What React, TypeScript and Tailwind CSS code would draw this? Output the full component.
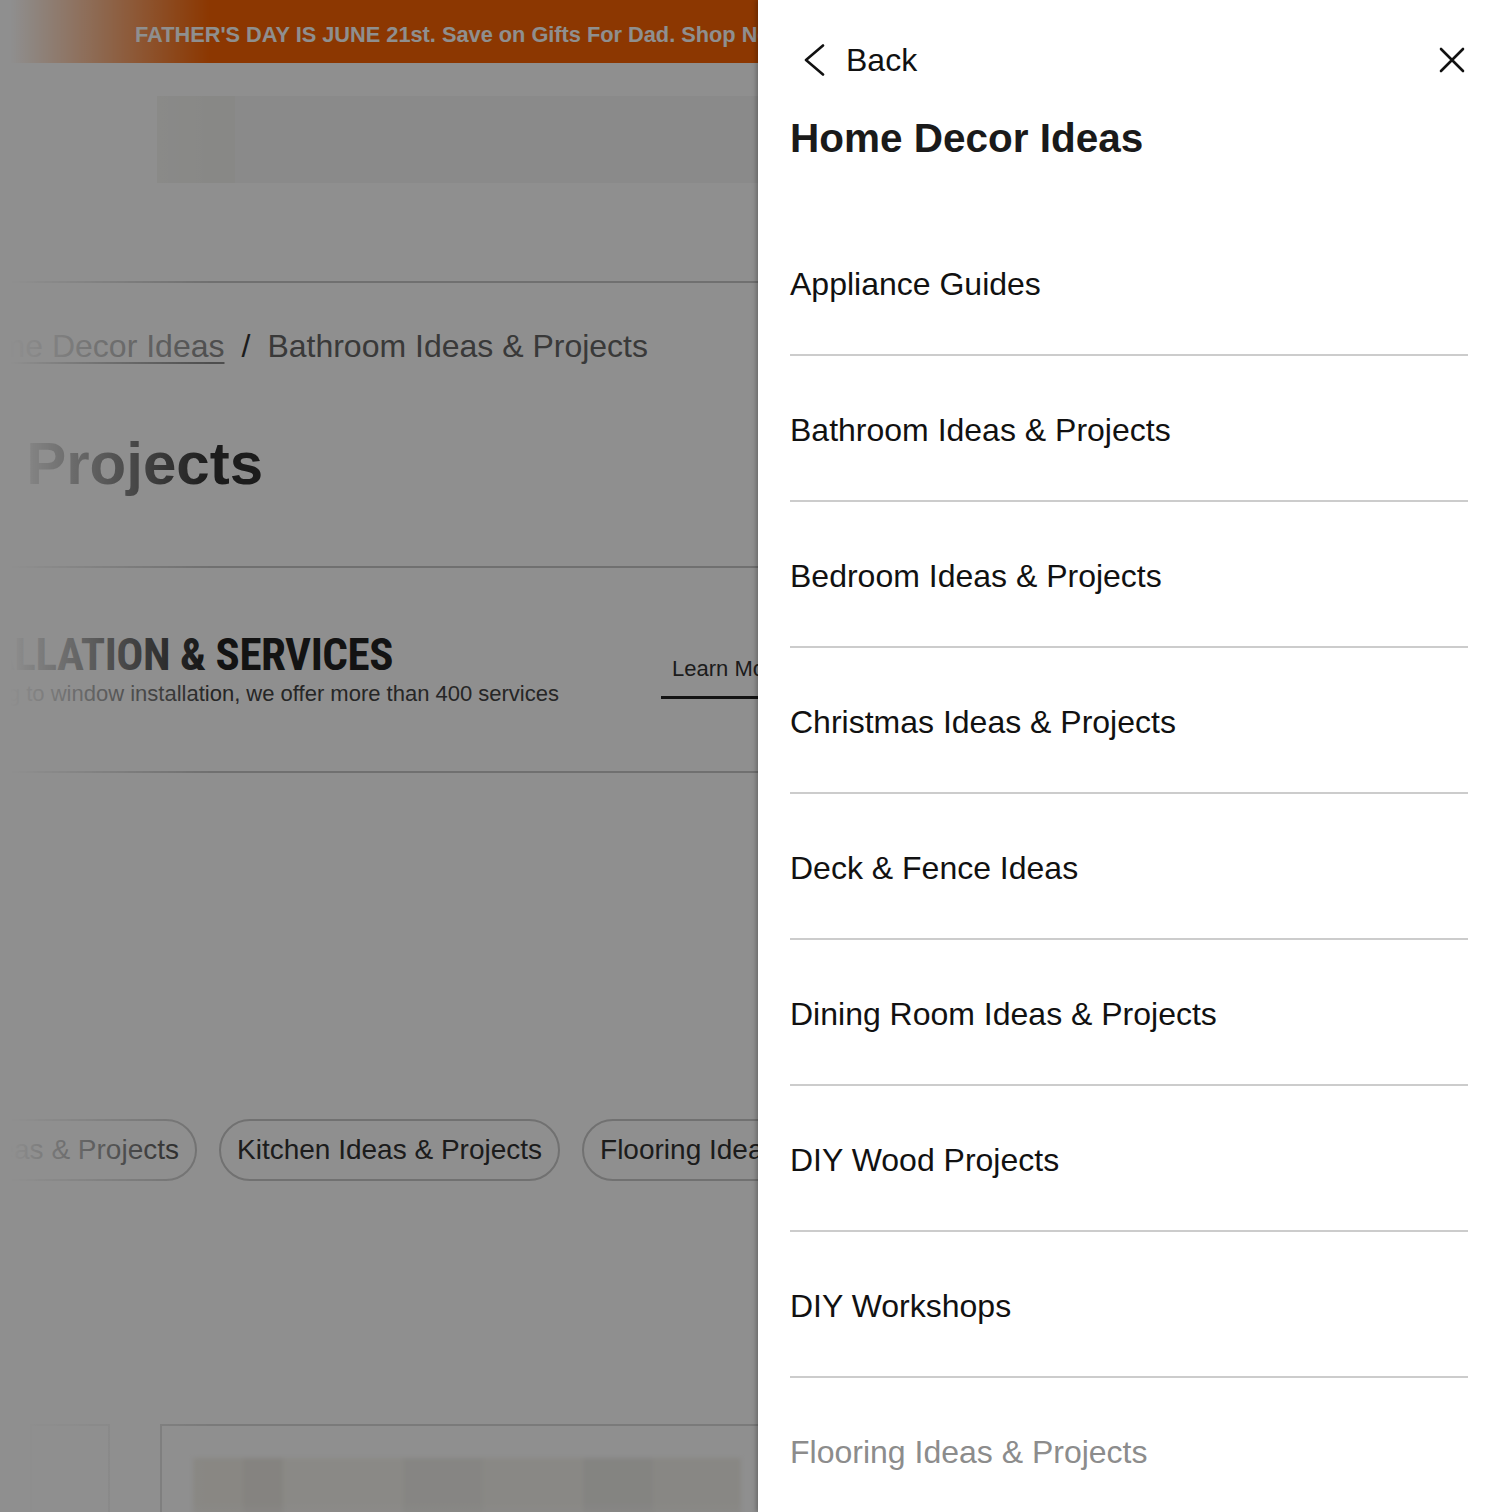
import React from "react";

const sans = { fontFamily: '"Liberation Sans", Arial, sans-serif' };

const menuLinks = [
  "Appliance Guides",
  "Bathroom Ideas & Projects",
  "Bedroom Ideas & Projects",
  "Christmas Ideas & Projects",
  "Deck & Fence Ideas",
  "Dining Room Ideas & Projects",
  "DIY Wood Projects",
  "DIY Workshops",
  "Flooring Ideas & Projects",
];

const Pill = ({ label }: { label: string }) => (
  <span className="shrink-0 whitespace-nowrap rounded-full border-2 border-[#c9c9c9] px-4 h-[62px] flex items-center text-[28px] text-[#333]">
    {label}
  </span>
);

// page sitting behind the drawer, scrolled a bit to the right
const BackgroundPage = () => (
  <div className="w-full flex flex-col bg-white" style={sans}>
    <div className="h-[63px] bg-[#f96302] flex items-center pt-[7px] pl-[135px] whitespace-nowrap">
      <span className="text-white font-bold text-[21.75px]">
        FATHER'S DAY IS JUNE 21st. Save on Gifts For Dad. Shop Now
      </span>
    </div>

    {/* search bar strip */}
    <div className="mt-[33px] h-[87px] ml-[157px] flex bg-[#f6f6f6]">
      <div className="w-[78px] bg-[#f3f3ef]" />
      <div className="flex-1" />
    </div>

    <div className="mt-[98px] h-[2px] bg-[#c8c8c8]" />

    <div className="mt-[45px] w-[648px] flex justify-end">
      <div className="whitespace-nowrap text-[32px] leading-[37px] flex items-center gap-[17px]">
        <span className="text-[#8c8c8c] underline underline-offset-[5px] decoration-[2px]">Home Decor Ideas</span>
        <span className="text-[#333]">/</span>
        <span className="text-[#666]">Bathroom Ideas &amp; Projects</span>
      </div>
    </div>

    <div className="mt-[65px] w-[263px] flex justify-end">
      <h1 className="whitespace-nowrap text-[60px] leading-[68px] font-bold text-[#333]">
        Bathroom Ideas &amp; Projects
      </h1>
    </div>

    <div className="mt-[68px] h-[2px] bg-[#c8c8c8]" />

    <div className="mt-[61px] flex items-start">
      <div className="w-[661px] flex flex-col shrink-0">
        <div className="w-[393px] flex justify-end">
          <span
            className="whitespace-nowrap text-[45px] leading-[52px] font-bold text-[#222] tracking-[-0.01em]"
            style={{ fontFamily: '"Liberation Sans Narrow", "Roboto Condensed", Arial, sans-serif' }}
          >
            INSTALLATION &amp; SERVICES
          </span>
        </div>
        <div className="w-[559px] flex justify-end">
          <span className="whitespace-nowrap text-[22px] leading-[26px] text-[#444]">
            From flooring to window installation, we offer more than 400 services
          </span>
        </div>
      </div>
      <div className="mt-[27px] pl-[11px] pr-6 pb-[14px] border-b-[3px] border-[#222] whitespace-nowrap text-[22px] leading-[26px] text-[#333]">
        Learn More
      </div>
    </div>

    <div className="mt-[64px] h-[2px] bg-[#c8c8c8]" />

    <div className="mt-[346px] flex gap-[22px]">
      <div className="w-[197px] shrink-0 flex justify-end">
        <Pill label="Bedroom Ideas & Projects" />
      </div>
      <Pill label="Kitchen Ideas & Projects" />
      <Pill label="Flooring Ideas & Projects" />
    </div>

    {/* article cards */}
    <div className="mt-[243px] flex gap-[50px] h-[120px]">
      <div className="w-[80px] ml-[30px] border-2 border-[#ececec]" />
      <div className="flex-1 border-2 border-[#dadada] pt-[32px] pl-[31px] relative">
        <div className="h-[60px] w-[548px] flex bg-[#f6f3ec] blur-[2px]">
          <div className="w-[50px] bg-[#f4f1ea]" />
          <div className="w-[40px] bg-[#edeae4]" />
          <div className="w-[120px] bg-[#f7f5ef]" />
          <div className="w-[80px] bg-[#efeee9]" />
          <div className="w-[100px] bg-[#f5f3ed]" />
          <div className="w-[70px] bg-[#ecebe7]" />
          <div className="flex-1 bg-[#f3f1eb]" />
        </div>
        <div className="absolute inset-x-0 bottom-0 h-[40px] bg-linear-to-b from-transparent to-white" />
      </div>
    </div>
  </div>
);

const ChevronLeft = () => (
  <svg width="36" height="32" viewBox="0 0 36 32" fill="none">
    <path d="M33 1.5 L16 16 L33 30.5" stroke="#111" strokeWidth="2.6" strokeLinecap="round" strokeLinejoin="round" />
  </svg>
);

const CloseIcon = () => (
  <svg width="26" height="26" viewBox="0 0 26 26" fill="none">
    <path d="M2 2 L24 24 M24 2 L2 24" stroke="#111" strokeWidth="2.6" strokeLinecap="round" />
  </svg>
);

const Drawer = () => (
  <aside
    className="absolute top-0 right-0 h-full w-[742px] bg-white shadow-[-2px_0_4px_rgba(0,0,0,0.25)] px-8 pt-[40px] overflow-hidden"
    style={sans}
  >
    <div className="h-[40px] flex items-center justify-between">
      <button className="flex items-center gap-5 text-[32px] text-[#111]">
        <ChevronLeft />
        <span className="leading-none">Back</span>
      </button>
      <button className="mr-[3px]">
        <CloseIcon />
      </button>
    </div>

    <h2 className="mt-[34px] text-[40.5px] leading-[48px] font-bold text-[#1a1a1a]">Home Decor Ideas</h2>

    <ul className="mt-[48px]">
      {menuLinks.map((label, i) => (
        <li
          key={label}
          className={
            "h-[146px] pt-1 flex items-center border-b-2 border-[#cccccc] text-[32px] " +
            (i === menuLinks.length - 1 ? "text-[#8c8c8c]" : "text-[#111]")
          }
        >
          {label}
        </li>
      ))}
    </ul>
  </aside>
);

export default function App() {
  return (
    <div className="relative w-[1500px] h-[1512px] overflow-hidden bg-white">
      <BackgroundPage />
      {/* soft fade on the left edge of the page */}
      <div className="absolute top-0 left-0 h-full w-[210px] bg-linear-to-r from-white from-5% to-transparent" />
      {/* dim overlay */}
      <div className="absolute inset-0 bg-black/[0.44]" />
      <Drawer />
    </div>
  );
}
